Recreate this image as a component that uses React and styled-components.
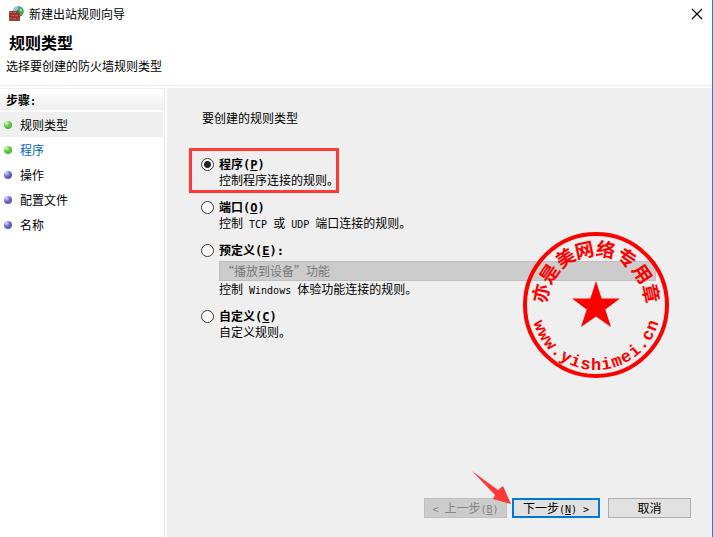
import React, { useState } from "react";
import styled, { createGlobalStyle } from "styled-components";

const GlobalStyle = createGlobalStyle`
  * { box-sizing: border-box; }
  body {
    margin: 0;
    background: #fff;
    color: #000;
    font-family: "Noto Sans CJK SC", sans-serif;
    font-size: 12px;
    line-height: 16px;
  }
  button, input, select { font: inherit; color: inherit; margin: 0; }
`;

const Window = styled.div`
  min-height: 100vh;
  display: flex;
  flex-direction: column;
  border-right: 1px solid #1883d7;
  overflow: hidden;
`;

const TitleBar = styled.header`
  display: flex;
  align-items: center;
  gap: 5px;
  height: 28px;
  padding: 0 9px 0 8px;
`;

const TitleText = styled.span`
  flex: 1;
`;

const CloseButton = styled.button`
  display: flex;
  padding: 0;
  border: 0;
  background: none;
`;

const PageHeader = styled.div`
  height: 57px;
  padding: 2px 6px 0;
`;

const PageTitle = styled.h1`
  margin: 0;
  padding-left: 3px;
  font-size: 16px;
  line-height: 24px;
`;

const PageSubtitle = styled.p`
  margin: 4px 0 0;
`;

const Body = styled.div`
  flex: 1;
  display: flex;
  gap: 2px;
  border-top: 1px solid #efefef;
  padding-top: 2px;
`;

const Sidebar = styled.nav`
  flex: 0 0 165px;
  border-top: 1px solid #efefef;
  border-right: 1px solid #e9e9e9;
`;

const StepsHeading = styled.h2`
  margin: 0 0 2px;
  padding: 0 6px;
  font-size: 12px;
  line-height: 21px;
  background: linear-gradient(#fff, #efefef);
`;

const StepList = styled.ol`
  margin: 0;
  padding: 0 1px 0 0;
  list-style: none;
`;

const Step = styled.li`
  display: flex;
  align-items: center;
  gap: 8px;
  height: 25px;
  padding-left: 4px;
  background: ${(p) => (p.$current ? "#efefef" : "transparent")};
`;

const StepLink = styled.a`
  color: #0066cc;
  text-decoration: none;
`;

const Bullet = styled.span`
  width: 8px;
  height: 8px;
  border-radius: 50%;
  background: ${(p) =>
    p.$ready
      ? "radial-gradient(circle at 30% 25%, #e0f5d8 0, #5cc83c 45%, #3cac28 100%)"
      : "radial-gradient(circle at 30% 25%, #dcdcf8 0, #6666cc 45%, #4c4cb4 100%)"};
`;

const Main = styled.main`
  flex: 1;
  display: flex;
  flex-direction: column;
  padding: 22px 21px 19px 34px;
  background: #efefef;
`;

const RuleForm = styled.fieldset`
  position: relative;
  flex: 1;
  min-width: 0;
  margin: 0;
  padding: 0 35px 0 0;
  border: 0;
`;

const Prompt = styled.legend`
  padding: 0 1px;
`;

const Options = styled.div`
  display: grid;
  gap: 11px;
  padding-top: 30px;
`;

const Option = styled.div`
  position: relative;
  display: grid;
  grid-template-columns: 13px minmax(0, 1fr);
  column-gap: 5px;
  width: ${(p) => (p.$wide ? "auto" : "fit-content")};
`;

const HighlightBox = styled.div`
  position: absolute;
  inset: -8px 0 -5px -12px;
  border: 3px solid #ff3838;
  pointer-events: none;
`;

const Radio = styled.input`
  appearance: none;
  align-self: center;
  width: 13px;
  height: 13px;
  border: 1px solid #333;
  border-radius: 50%;
  background: #fff;
  &:checked {
    background: radial-gradient(circle, #222 0 3px, #fff 4px);
  }
`;

const OptionTitle = styled.label`
  font-weight: 700;
`;

const Description = styled.p`
  grid-column: 2;
  margin: 0;
  white-space: nowrap;
`;

const Latin = styled.span`
  font-family: "DejaVu Sans Mono", monospace;
  font-size: ${(p) => (p.$large ? 12 : 10)}px;
  line-height: 0;
  white-space: pre;
`;

const FeatureSelect = styled.select`
  grid-column: 2;
  appearance: none;
  width: 100%;
  height: 20px;
  margin: 3px 0 0;
  padding: 0 2px;
  border: 1px solid #bfbfbf;
  border-radius: 0;
  background: #ccc;
  color: #777;
  opacity: 1;
`;

const Stamp = styled.svg`
  position: absolute;
  top: 106px;
  right: 22px;
  width: 146px;
  height: 146px;
  fill: #f00;
  font-weight: 700;
  pointer-events: none;
`;

const Footer = styled.footer`
  display: flex;
  justify-content: flex-end;
  gap: 8px;
`;

const StepButtons = styled.div`
  display: flex;
  gap: 5px;
`;

const NextWrap = styled.div`
  position: relative;
`;

const Arrow = styled.svg`
  position: absolute;
  left: -42px;
  top: -29px;
  width: 42px;
  height: 36px;
  pointer-events: none;
`;

const Button = styled.button`
  width: ${(p) => (p.$primary ? 88 : 83)}px;
  height: 20px;
  padding: 0;
  border: ${(p) => (p.$primary ? "2px solid #0078d7" : "1px solid #adadad")};
  background: #e1e1e1;
  line-height: 16px;
  white-space: pre;
  &:disabled {
    border-color: #bfbfbf;
    background: #ccc;
    color: #838383;
  }
`;

function FirewallIcon() {
  return (
    <svg width="16" height="16" viewBox="0 0 16 16" aria-hidden="true">
      <circle cx="10.5" cy="5.5" r="5.2" fill="#2476bd" />
      <path d="M6 3q2-3 5-2l-1 3-2 1v3H6z" fill="#70cdf0" />
      <path d="M11 1q5 1 4 6l-2 3-2-2 1-2-2-2z" fill="#46b43b" />
      <path d="M12 2l2 2-1 2-1-1z" fill="#b3e56b" />
      <path d="M1 5h10v2h1v8H1z" fill="#a54231" />
      <path d="M1 8h11M1 11h11M4.500 5v3M8.500 5v3M2.500 8v3M6.500 8v3M10.500 8v3M4.500 11v4M8.500 11v4" stroke="#7c3026" strokeWidth=".6" />
      <path d="M1 6.500h3M5 6.500h3M3 9.500h3M7 9.500h3M1 12.500h3M5 12.500h3" stroke="#c0604b" />
    </svg>
  );
}

const SEAL_NAME = [
  ["亦", -78], ["是", -56], ["美", -33], ["网", -12],
  ["络", 10], ["专", 33], ["用", 56], ["章", 78],
];
const SEAL_SITE = "www.yishimei.cn".split("");

function CompanySeal() {
  return (
    <Stamp viewBox="-73 -73 146 146" role="img" aria-label="亦是美网络专用章">
      <circle r="71" fill="none" stroke="#f00" strokeWidth="4" />
      <path d="M0-24 5.600-6.500H24L9.300 4.500 15 22 0 11.500-15 22-9.300 4.500-24-6.500H-5.600Z" />
      <g fontFamily="Noto Sans CJK SC, sans-serif" fontSize="19" textAnchor="middle">
        {SEAL_NAME.map(([char, angle]) => (
          <text key={char} y="-49" transform={`rotate(${angle})`}>{char}</text>
        ))}
      </g>
      <g fontFamily="Liberation Mono, monospace" fontSize="17" textAnchor="middle">
        {SEAL_SITE.map((char, i) => (
          <text key={i} y="65" transform={`rotate(${(7 - i) * 10})`}>{char}</text>
        ))}
      </g>
    </Stamp>
  );
}

function RuleOption({ id, title, hotkey, colon, value, onChange, highlight, wide, children }) {
  return (
    <Option $wide={wide}>
      <Radio type="radio" name="rule" id={id} checked={value === id} onChange={() => onChange(id)} />
      <OptionTitle htmlFor={id}>
        {title}
        <Latin $large>(<u>{hotkey}</u>){colon && ":"}</Latin>
      </OptionTitle>
      {children}
      {highlight && <HighlightBox />}
    </Option>
  );
}

const STEPS = [
  { name: "规则类型", ready: true, current: true },
  { name: "程序", ready: true, link: true },
  { name: "操作" },
  { name: "配置文件" },
  { name: "名称" },
];

export default function App() {
  const [rule, setRule] = useState("program");
  const shared = { value: rule, onChange: setRule };
  return (
    <>
      <GlobalStyle />
      <Window>
        <TitleBar>
          <FirewallIcon />
          <TitleText>新建出站规则向导</TitleText>
          <CloseButton type="button" aria-label="关闭">
            <svg width="12" height="12" viewBox="0 0 12 12" stroke="#000" strokeWidth="1.200">
              <path d="M1 1l10 10M11 1L1 11" />
            </svg>
          </CloseButton>
        </TitleBar>
        <PageHeader>
          <PageTitle>规则类型</PageTitle>
          <PageSubtitle>选择要创建的防火墙规则类型</PageSubtitle>
        </PageHeader>
        <Body>
          <Sidebar>
            <StepsHeading>步骤<Latin>:</Latin></StepsHeading>
            <StepList>
              {STEPS.map((s) => (
                <Step key={s.name} $current={s.current}>
                  <Bullet $ready={s.ready} />
                  {s.link ? <StepLink href="#program">{s.name}</StepLink> : <span>{s.name}</span>}
                </Step>
              ))}
            </StepList>
          </Sidebar>
          <Main>
            <RuleForm>
              <Prompt>要创建的规则类型</Prompt>
              <Options>
                <RuleOption id="program" title="程序" hotkey="P" highlight {...shared}>
                  <Description>控制程序连接的规则。</Description>
                </RuleOption>
                <RuleOption id="port" title="端口" hotkey="O" {...shared}>
                  <Description>
                    控制<Latin> TCP </Latin>或<Latin> UDP </Latin>端口连接的规则。
                  </Description>
                </RuleOption>
                <RuleOption id="predefined" title="预定义" hotkey="E" colon wide {...shared}>
                  <FeatureSelect disabled aria-label="预定义">
                    <option>“播放到设备”功能</option>
                  </FeatureSelect>
                  <Description>
                    控制<Latin> Windows </Latin>体验功能连接的规则。
                  </Description>
                </RuleOption>
                <RuleOption id="custom" title="自定义" hotkey="C" {...shared}>
                  <Description>自定义规则。</Description>
                </RuleOption>
              </Options>
              <CompanySeal />
            </RuleForm>
            <Footer>
              <StepButtons>
                <Button type="button" disabled>
                  <Latin>&lt; </Latin>上一步<Latin>(<u>B</u>)</Latin>
                </Button>
                <NextWrap>
                  <Button type="button" $primary>
                    下一步<Latin>(<u>N</u>) &gt;</Latin>
                  </Button>
                  <Arrow viewBox="0 0 42 36" aria-hidden="true">
                    <path d="M2 2 28 21 33 17 41 35 23 30 25 26Z" fill="#ff3838" />
                  </Arrow>
                </NextWrap>
              </StepButtons>
              <Button type="button">取消</Button>
            </Footer>
          </Main>
        </Body>
      </Window>
    </>
  );
}
